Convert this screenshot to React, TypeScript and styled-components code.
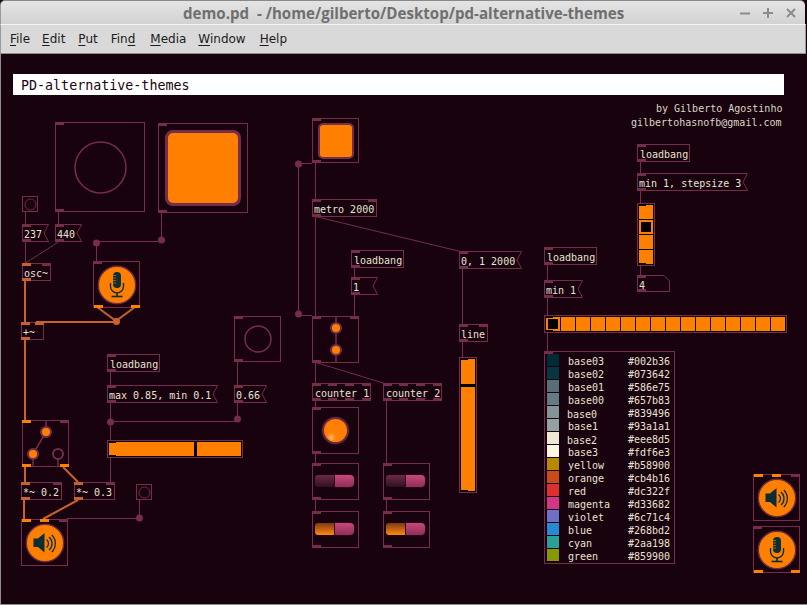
import React from "react";
import styled, { createGlobalStyle } from "styled-components";

const MAROON = "#762c4a";
const SIGNAL = "#c8622c";
const HOT = "#ff7f00";
const CANVAS = "#18020e";
const MONO = `"DejaVu Sans Mono", "Liberation Mono", monospace`;

const Global = createGlobalStyle`
  html, body { margin: 0; padding: 0; background: ${CANVAS}; }
  #root { width: 807px; height: 605px; overflow: hidden; }
`;

const Window = styled.div`
  width: 807px;
  height: 605px;
  display: flex;
  flex-direction: column;
  background: ${CANVAS};
  overflow: hidden;
`;

const TitleBar = styled.header`
  height: 24px;
  flex: none;
  margin-right: 2px;
  display: flex;
  align-items: center;
  position: relative;
  box-sizing: border-box;
  border-top: 1px solid #8a8a8a;
  border-left: 1px solid #9a9a9a;
  border-radius: 5px 5px 0 0;
  background: linear-gradient(#e4e4e4, #d2d2d2);
`;

const TitleText = styled.h1`
  margin: 0 0 0 182px;
  font: bold 15.1px "Open Sans", "Liberation Sans", sans-serif;
  color: #6f6f6f;
  white-space: pre;
`;

const Controls = styled.div`
  margin-left: auto;
  margin-right: 9px;
  display: flex;
  gap: 13px;
`;

const WinButton = styled.svg`
  width: 10px;
  height: 10px;
  display: block;
  stroke: #8c8c8c;
  stroke-width: 2;
`;

const MenuBar = styled.nav`
  height: 30px;
  flex: none;
  margin-right: 1px;
  display: flex;
  align-items: center;
  box-sizing: border-box;
  padding-left: 9px;
  border-top: 1px solid #f4f4f4;
  border-left: 1px solid #9a9a9a;
  border-right: 1px solid #999;
  border-bottom: 1px solid #8e8e8e;
  background: #d9d9d9;
  font: 12px "DejaVu Sans", sans-serif;
  color: #1c1c1c;
`;

const MenuItem = styled.span<{ $gap: number }>`
  margin-right: ${(p) => p.$gap}px;
  u {
    text-underline-offset: 2px;
  }
`;

const Canvas = styled.main`
  position: relative;
  flex: 1;
  border-left: 1px solid #8e8e8e;
  border-bottom: 1px solid #8e8e8e;
  background: ${CANVAS};
`;

const Wires = styled.svg`
  position: absolute;
  left: 0;
  top: 0;
  width: 806px;
  height: 550px;
`;

type BoxProps = { $x: number; $y: number; $w: number; $h: number };

const Node = styled.div<BoxProps & { $framed?: boolean; $black?: boolean }>`
  position: absolute;
  left: ${(p) => p.$x - 1}px;
  top: ${(p) => p.$y - 54}px;
  width: ${(p) => p.$w}px;
  height: ${(p) => p.$h}px;
  box-sizing: border-box;
  display: flex;
  align-items: center;
  justify-content: center;
  box-shadow: ${(p) => (p.$framed ? `inset 0 0 0 1px ${MAROON}` : "none")};
  font: 10px/12px ${MONO};
  color: #e9e3d2;
  white-space: pre;
`;

const TextNode = styled(Node)<{ $inset?: number }>`
  justify-content: flex-start;
  padding-left: ${(p) => p.$inset ?? 2}px;
`;

const Banner = styled(Node)`
  justify-content: flex-start;
  padding: 2px 0 0 8px;
  background: #fff;
  color: #1a0410;
  font-size: 13.33px;
`;

const Comment = styled(Node)`
  justify-content: flex-start;
  padding-top: 2px;
  color: #dcd8c8;
`;

const MeterNode = styled(Node)`
  padding: 1px;
  background: #050003;
  box-shadow: none;
  border: 1px solid ${MAROON};
  align-items: stretch;
  flex-direction: ${(p) => (p.$h > p.$w ? "column" : "row")};
`;

const RadioNode = styled(Node)<{ $column?: boolean }>`
  padding: 1px;
  background: #050003;
  box-shadow: none;
  border: 1px solid ${MAROON};
  align-items: stretch;
  justify-content: flex-start;
  gap: 1px;
  flex-direction: ${(p) => (p.$column ? "column" : "row")};
`;

const Cell = styled.div<{ $on?: boolean }>`
  flex: 0 0 14px;
  background: ${(p) => (p.$on ? "#050003" : HOT)};
  box-sizing: border-box;
  border: ${(p) => (p.$on ? `2px solid ${HOT}` : "none")};
`;

const Fill = styled.div<{ $grow: number; $gapBefore?: number; $vertical?: boolean }>`
  flex: ${(p) => p.$grow} 0 0;
  background: ${HOT};
  ${(p) =>
    p.$gapBefore
      ? p.$vertical
        ? `margin-top:${p.$gapBefore}px;`
        : `margin-left:${p.$gapBefore}px;`
      : ""}
`;

const Notch = styled.span<{ $side: "top" | "bottom" }>`
  position: absolute;
  left: 0;
  ${(p) => p.$side}: 0;
  width: 8px;
  height: 2px;
  background: #050003;
`;

const Port = styled.span<{ $side: "top" | "bottom"; $at: number; $kind: string }>`
  position: absolute;
  left: ${(p) => p.$at}px;
  ${(p) => p.$side}: 0;
  width: 9px;
  height: 3px;
  background: ${(p) =>
    p.$kind === "h" ? HOT : p.$kind === "s" ? SIGNAL : MAROON};
`;

const Outline = styled.svg`
  position: absolute;
  left: 0;
  top: 0;
  width: 100%;
  height: 100%;
  fill: none;
  stroke: ${MAROON};
  stroke-width: 1;
`;

const Caption = styled.span`
  position: relative;
  margin-top: 4px;
`;

const ToggleFace = styled.div<{ $w: number; $h: number; $b: number; $r: number }>`
  width: ${(p) => p.$w}px;
  height: ${(p) => p.$h}px;
  box-sizing: border-box;
  background: ${HOT};
  border: ${(p) => p.$b}px solid ${MAROON};
  border-radius: ${(p) => p.$r}px;
`;

const Lamp = styled.div`
  width: 27px;
  height: 27px;
  box-sizing: border-box;
  border-radius: 50%;
  border: 2px solid #6d2a44;
  background: radial-gradient(circle at 32% 80%, #ffc48a 0, #ff9a2a 10%, ${HOT} 22%);
  box-shadow: 0 0 2px #5a2036;
`;

const Track = styled.div`
  display: flex;
  width: 39px;
  height: 12px;
  margin: 0 0 1px -2px;
`;

const TrackFill = styled.div<{ $lit?: boolean }>`
  width: 20px;
  border-radius: 3px 0 0 3px;
  background: ${(p) =>
    p.$lit
      ? "linear-gradient(#7c3a10, #b85c12 45%, #ff8a0a)"
      : "linear-gradient(#6a2a45, #4a1a30 60%, #30101f)"};
`;

const Knob = styled.div`
  width: 19px;
  border-radius: 0 4px 4px 0;
  box-shadow: 0 0 0 1px #2c0a1a;
  background: linear-gradient(#c9487c, #a83a68 55%, #8e3058);
`;

const ColorTable = styled(Node)`
  display: grid;
  align-content: start;
  justify-content: start;
  grid-auto-rows: 12px;
  row-gap: 1px;
  padding: 3px 0 0 3px;
`;

const ColorRow = styled.div`
  display: flex;
  align-items: center;
`;

const Swatch = styled.i<{ $color: string }>`
  width: 12px;
  height: 12px;
  background: ${(p) => p.$color};
`;

const ColorName = styled.span<{ $nudge?: boolean }>`
  width: 60px;
  margin: ${(p) => (p.$nudge ? "6px 1px 0 8px" : "4px 0 0 9px")};
`;

const ColorHex = styled.span`
  margin-top: 4px;
`;

type P = [number, string?];

function Ports({ top = [], bottom = [] }: { top?: P[]; bottom?: P[] }) {
  return (
    <>
      {top.map(([at, k], i) => (
        <Port key={"t" + i} $side="top" $at={at} $kind={k || "c"} />
      ))}
      {bottom.map(([at, k], i) => (
        <Port key={"b" + i} $side="bottom" $at={at} $kind={k || "c"} />
      ))}
    </>
  );
}

const Obj = ({
  x, y, w, h = 18, text, inset, top = [[0]], bottom = [[0]],
}: { x: number; y: number; w: number; h?: number; text: string; inset?: number; top?: P[]; bottom?: P[] }) => (
  <TextNode $x={x} $y={y} $w={w} $h={h} $inset={inset} $framed>
    <Ports top={top} bottom={bottom} />
    <Caption>{text}</Caption>
  </TextNode>
);

const Msg = ({
  x, y, w, text, h = 18, kind = "flag",
}: { x: number; y: number; w: number; text: string; h?: number; kind?: "flag" | "atom" }) => (
  <TextNode $x={x} $y={y} $w={w} $h={h}>
    <Outline viewBox={`0 0 ${w} ${h}`}>
      {kind === "flag" ? (
        <polygon points={`0.5,0.5 ${w - 0.5},0.5 ${w - 5},${h / 2} ${w - 0.5},${h - 0.5} 0.5,${h - 0.5}`} />
      ) : (
        <polygon points={`0.5,0.5 ${w - 6},0.5 ${w - 0.5},6 ${w - 0.5},${h - 0.5} 0.5,${h - 0.5}`} />
      )}
    </Outline>
    <Ports top={[[0]]} bottom={[[0]]} />
    <Caption>{text}</Caption>
  </TextNode>
);

const Ring = ({ r, stroke = MAROON, sw = 1.5 }: { r: number; stroke?: string; sw?: number }) => (
  <svg width={r * 2 + 4} height={r * 2 + 4} viewBox={`${-r - 2} ${-r - 2} ${r * 2 + 4} ${r * 2 + 4}`}>
    <circle r={r} fill="none" stroke={stroke} strokeWidth={sw} />
  </svg>
);

const ICON = "#0b2d35";

const MicIcon = () => (
  <svg width="40" height="40" viewBox="-20 -20 40 40">
    <circle r="18.7" fill={HOT} stroke="#6d2a44" strokeWidth="1.4" />
    <rect x="-4" y="-13" width="8" height="16" rx="4" fill={ICON} />
    <path d="M-4 -9.5h3M-4 -7h3M-4 -4.5h3M-4 -2h3" stroke={HOT} strokeWidth="0.6" />
    <path d="M-6.5 -2v3.5a6.5 6.5 0 0 0 13 0v-3.5" fill="none" stroke={ICON} strokeWidth="1.4" />
    <path d="M0 8v3.5" stroke={ICON} strokeWidth="1.6" />
    <path d="M-5.5 11.5h11" stroke={ICON} strokeWidth="1.6" />
  </svg>
);

const SpeakerIcon = () => (
  <svg width="40" height="40" viewBox="-20 -20 40 40">
    <circle r="18.7" fill={HOT} stroke="#6d2a44" strokeWidth="1.4" />
    <path d="M-11.5 -4.5h4.5l6.5 -5.5v19.5l-6.5 -5.5h-4.5z" fill={ICON} />
    <path d="M1.5 -3.5a5 5 0 0 1 0 8" fill="none" stroke={ICON} strokeWidth="1.3" />
    <path d="M4 -6a8.5 8.5 0 0 1 0 13" fill="none" stroke={ICON} strokeWidth="1.3" />
    <path d="M6.8 -8a12 12 0 0 1 0 17" fill="none" stroke={ICON} strokeWidth="1.3" />
  </svg>
);

const controlWires = [
  "M25.5 212V224", "M58.5 211V224", "M25.5 242V263", "M58.5 242L25.5 263",
  "M161.5 212V241", "M161.5 241.5H96.5V261",
  "M110.5 372V385", "M110.5 402V440", "M110.5 458V482", "M110.5 421.5H237.5",
  "M237.5 362V385", "M237.5 402V420",
  "M139.5 500V518", "M67 518.5H139.5",
  "M315.5 163V199", "M312 163.5H298.5V315.5H312", "M315.5 217V316", "M315.5 216.5L460.5 251.5",
  "M354.5 268V277", "M354.5 295V316", "M315.5 363V384", "M316 362.5L385 383.5",
  "M386.5 401V463", "M386.5 499V511", "M315.5 401V407", "M315.5 454V463", "M315.5 499V511",
  "M462.5 269V325", "M462.5 342V357",
  "M547.5 265V281", "M547.5 298V316", "M547.5 333V352",
  "M640.5 162V174", "M640.5 191V204", "M640.5 266V276",
];

const signalWires = [
  "M25 281V322", "M25 340V420", "M36 322H116", "M97 307L116 321", "M135 307L116 321",
  "M25 467V482", "M24 500V519", "M63 467L78 482", "M78 500L43 519",
];

const controlDots: [number, number][] = [
  [96.5, 243], [161.5, 240], [110.5, 422], [237.5, 419], [139.5, 518], [298.5, 164], [298.5, 314],
];

const palette: [string, string, boolean?][] = [
  ["base03", "#002b36"], ["base02", "#073642"], ["base01", "#586e75"], ["base00", "#657b83"],
  ["base0", "#839496", true], ["base1", "#93a1a1"], ["base2", "#eee8d5", true], ["base3", "#fdf6e3"],
  ["yellow", "#b58900"], ["orange", "#cb4b16"], ["red", "#dc322f"], ["magenta", "#d33682"],
  ["violet", "#6c71c4"], ["blue", "#268bd2"], ["cyan", "#2aa198"], ["green", "#859900"],
];

const menus: [React.ReactNode, number][] = [
  [<><u>F</u>ile</>, 12],
  [<><u>E</u>dit</>, 13],
  [<><u>P</u>ut</>, 13],
  [<>Fin<u>d</u></>, 15],
  [<><u>M</u>edia</>, 12],
  [<><u>W</u>indow</>, 14],
  [<><u>H</u>elp</>, 0],
];

const SliderBox = ({ x, y, lit }: { x: number; y: number; lit?: boolean }) => (
  <Node $x={x} $y={y} $w={47} $h={37} $framed>
    <Ports top={[[0]]} bottom={[[0]]} />
    <Track>
      <TrackFill $lit={lit} />
      <Knob />
    </Track>
  </Node>
);

const Switch = ({ x, y }: { x: number; y: number }) => (
  <svg width="47" height="47" viewBox="0 0 47 47">
    <path d={`M${x} 0V12L${x - 13} 34V47`} fill="none" stroke={MAROON} strokeWidth="1.5" />
    <path d={`M${x + 12} 34V47`} fill="none" stroke={MAROON} strokeWidth="1.5" />
    <circle cx={x} cy={y} r="5" fill={HOT} stroke={MAROON} strokeWidth="2" />
    <circle cx={x - 13} cy={y + 22} r="5" fill={HOT} stroke={MAROON} strokeWidth="2" />
    <circle cx={x + 12} cy={y + 22} r="5" fill={CANVAS} stroke={MAROON} strokeWidth="2" />
  </svg>
);

const Gate = () => (
  <svg width="47" height="47" viewBox="0 0 47 47">
    <path d="M24 0V47" stroke={MAROON} strokeWidth="1.5" />
    <circle cx="24" cy="12" r="5" fill={HOT} stroke={MAROON} strokeWidth="2" />
    <circle cx="24" cy="34" r="5" fill={HOT} stroke={MAROON} strokeWidth="2" />
  </svg>
);

const Notches = () => (
  <>
    <Notch $side="top" />
    <Notch $side="bottom" />
  </>
);

export default function App() {
  return (
    <Window>
      <Global />
      <TitleBar>
        <TitleText>demo.pd  - /home/gilberto/Desktop/pd-alternative-themes</TitleText>
        <Controls>
          <WinButton viewBox="0 0 10 10"><path d="M0 5.5H10" /></WinButton>
          <WinButton viewBox="0 0 10 10"><path d="M0 5H10M5 0V10" /></WinButton>
          <WinButton viewBox="0 0 10 10"><path d="M1 1L9 9M9 1L1 9" /></WinButton>
        </Controls>
      </TitleBar>
      <MenuBar>
        {menus.map(([label, gap], i) => (
          <MenuItem key={i} $gap={gap}>{label}</MenuItem>
        ))}
      </MenuBar>
      <Canvas>
        <Wires viewBox="1 54 806 550">
          {controlWires.map((d) => (
            <path key={d} d={d} fill="none" stroke={MAROON} strokeWidth="1" />
          ))}
          {signalWires.map((d) => (
            <path key={d} d={d} fill="none" stroke={SIGNAL} strokeWidth="2" />
          ))}
          {controlDots.map(([cx, cy]) => (
            <circle key={cx + "-" + cy} cx={cx} cy={cy} r="3.5" fill={MAROON} />
          ))}
          <circle cx="116.5" cy="321.5" r="3.5" fill={SIGNAL} />
        </Wires>

        <Banner $x={13} $y={74} $w={771} $h={21}>PD-alternative-themes</Banner>
        <Comment $x={656} $y={102} $w={130} $h={12}>by Gilberto Agostinho</Comment>
        <Comment $x={631} $y={116} $w={154} $h={12}>gilbertohasnofb@gmail.com</Comment>

        <Node $x={55} $y={122} $w={90} $h={90} $framed>
          <Ports top={[[0]]} bottom={[[0]]} />
          <Ring r={25.5} />
        </Node>
        <Node $x={158} $y={123} $w={90} $h={90} $framed>
          <Ports top={[[0]]} bottom={[[0]]} />
          <ToggleFace $w={76} $h={76} $b={3} $r={8} />
        </Node>
        <Node $x={22} $y={196} $w={16} $h={16} $framed>
          <Ring r={5.5} sw={1} />
        </Node>
        <Msg x={22} y={224} w={27} text="237" />
        <Msg x={55} y={224} w={27} text="440" />
        <Obj x={22} y={263} w={29} text="osc~" top={[[0, "s"], [20]]} bottom={[[0, "s"]]} />
        <Node $x={93} $y={261} $w={47} $h={47} $framed>
          <Ports top={[[0]]} bottom={[[1, "h"], [38, "h"]]} />
          <MicIcon />
        </Node>
        <Obj x={21} y={322} w={23} text="+~" top={[[0, "s"], [14, "s"]]} bottom={[[0, "s"]]} />

        <Node $x={22} $y={420} $w={47} $h={47} $framed>
          <Ports top={[[0, "h"], [38]]} bottom={[[0, "h"], [38, "h"]]} />
          <Switch x={24} y={12} />
        </Node>
        <Obj x={21} y={482} w={41} text="*~ 0.2" top={[[0, "s"], [32]]} bottom={[[0, "s"]]} />
        <Obj x={74} y={482} w={41} text="*~ 0.3" top={[[0, "s"], [32]]} bottom={[[0, "s"]]} />
        <Node $x={136} $y={484} $w={16} $h={16} $framed>
          <Ring r={5.5} sw={1} />
        </Node>
        <Node $x={21} $y={519} $w={47} $h={47} $framed>
          <Ports top={[[1, "h"], [19, "h"], [38]]} />
          <SpeakerIcon />
        </Node>

        <Obj x={107} y={354} w={53} inset={3} text="loadbang" />
        <Msg x={107} y={385} w={111} text="max 0.85, min 0.1" />
        <MeterNode $x={107} $y={440} $w={136} $h={18}>
          <Notches />
          <Fill $grow={85} />
          <Fill $grow={44} $gapBefore={3} />
        </MeterNode>
        <Node $x={234} $y={316} $w={47} $h={46} $framed>
          <Ports top={[[0]]} bottom={[[0]]} />
          <Ring r={13} />
        </Node>
        <Msg x={234} y={385} w={33} text="0.66" />

        <Node $x={312} $y={118} $w={47} $h={45} $framed>
          <Ports top={[[0]]} bottom={[[0]]} />
          <ToggleFace $w={36} $h={36} $b={2} $r={5} />
        </Node>
        <Obj x={312} y={199} w={65} text="metro 2000" top={[[0], [56]]} />
        <Obj x={351} y={250} w={53} inset={3} text="loadbang" />
        <Msg x={351} y={277} w={27} text="1" />
        <Node $x={312} $y={316} $w={47} $h={47} $framed>
          <Ports top={[[0], [38]]} bottom={[[0]]} />
          <Gate />
        </Node>
        <Obj x={312} y={383} w={59} inset={3} text="counter 1" top={[[0], [16], [33], [50]]} bottom={[[0], [16], [33], [50]]} />
        <Obj x={383} y={383} w={59} inset={3} text="counter 2" top={[[0], [16], [33], [50]]} bottom={[[0], [16], [33], [50]]} />
        <Node $x={312} $y={407} $w={47} $h={47} $framed>
          <Ports top={[[0]]} bottom={[[0]]} />
          <Lamp />
        </Node>
        <SliderBox x={312} y={463} />
        <SliderBox x={312} y={511} lit />
        <SliderBox x={383} y={463} />
        <SliderBox x={383} y={511} lit />

        <Msg x={459} y={251} w={63} text="0, 1 2000" />
        <Obj x={459} y={324} w={29} text="line" top={[[0], [20]]} />
        <MeterNode $x={459} $y={357} $w={18} $h={136}>
          <Notches />
          <Fill $grow={25} $vertical />
          <Fill $grow={104} $gapBefore={3} $vertical />
        </MeterNode>

        <Obj x={544} y={247} w={53} inset={3} text="loadbang" />
        <Msg x={544} y={280} w={39} text="min 1" />
        <RadioNode $x={544} $y={315} $w={243} $h={18}>
          <Notches />
          {Array.from({ length: 16 }, (_, i) => <Cell key={i} $on={i === 0} />)}
        </RadioNode>
        <ColorTable $x={544} $y={351} $w={131} $h={213} $framed>
          <Ports top={[[0]]} />
          {palette.map(([name, hex, nudge]) => (
            <ColorRow key={name}>
              <Swatch $color={hex} />
              <ColorName $nudge={nudge}>{name}</ColorName>
              <ColorHex>{hex}</ColorHex>
            </ColorRow>
          ))}
        </ColorTable>

        <Obj x={637} y={144} w={53} inset={3} text="loadbang" />
        <Msg x={637} y={173} w={111} text="min 1, stepsize 3" />
        <RadioNode $x={637} $y={203} $w={18} $h={63} $column>
          <Notches />
          {[0, 1, 2, 3].map((i) => <Cell key={i} $on={i === 1} />)}
        </RadioNode>
        <Msg x={637} y={275} w={33} h={17} text="4" kind="atom" />

        <Node $x={753} $y={474} $w={47} $h={47} $framed>
          <Ports top={[[1, "h"], [19, "h"], [38]]} />
          <SpeakerIcon />
        </Node>
        <Node $x={753} $y={526} $w={47} $h={47} $framed>
          <Ports top={[[0]]} bottom={[[1, "h"], [38, "h"]]} />
          <MicIcon />
        </Node>
      </Canvas>
    </Window>
  );
}
